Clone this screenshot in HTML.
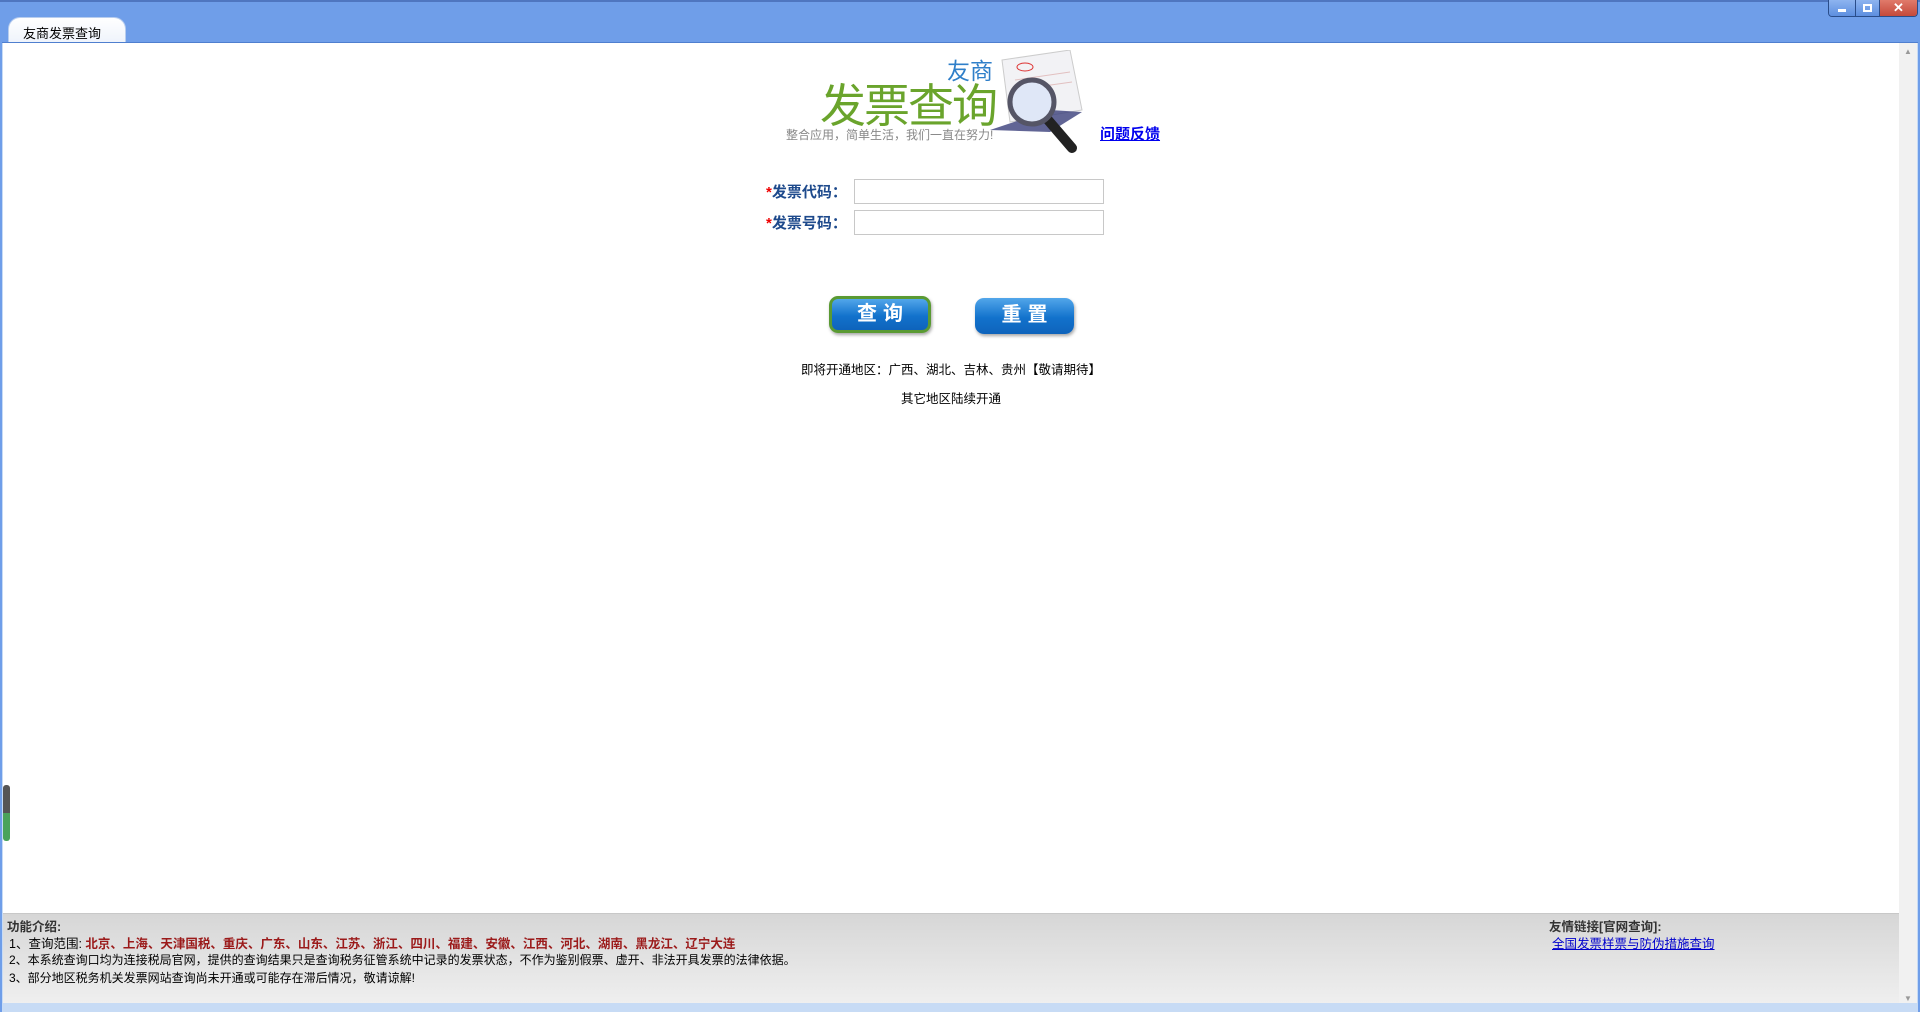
<!DOCTYPE html>
<html><head><meta charset="utf-8"><style>
*{margin:0;padding:0;box-sizing:border-box}
body{width:1920px;height:1012px;overflow:hidden;background:#6f9ee9;font-family:"Liberation Sans","Noto Sans CJK SC","WenQuanYi Zen Hei",sans-serif;position:relative}
.abs{position:absolute}
.tab{left:8px;top:17px;width:118px;height:26px;background:linear-gradient(#fff,#eef3fb);border-radius:12px 12px 0 0;font-size:13px;color:#000;padding:5px 0 0 14px;border:1px solid #b8cdee;border-bottom:0}
.frame{left:2px;top:42px;width:1916px;height:970px;background:#c7dbf5;border-top:1px solid #4f7fcf}
.content{left:3px;top:43px;width:1896px;height:870px;background:#fff}
.sb{left:1899px;top:43px;width:18px;height:960px;background:#f1f1f1}
.bottom{left:3px;top:913px;width:1896px;height:90px;background:linear-gradient(#d6d6d6,#efefef);border-top:1px solid #c8c8c8;font-size:12.5px;color:#000}
.lbl{font-size:15px;font-weight:bold;color:#1e4a8c}
.lbl b{color:#e00}
.inp{width:250px;height:25px;border:1px solid #c8c8c8;background:#fff}
.btn{width:102px;height:37px;border-radius:9px;background:linear-gradient(#52a6ea,#1272cc 55%,#0e63bb);color:#fff;font-size:20px;font-weight:bold;text-align:center;line-height:35px;letter-spacing:6px;text-indent:6px;box-shadow:1px 2px 3px rgba(0,0,0,.35)}
.t{font-size:12.5px;color:#000;text-align:center;width:400px;left:751px}
</style></head><body>
<div class="abs" style="left:0;top:0;width:1920px;height:2px;background:#4f76c0"></div>
<div class="abs tab">友商发票查询</div>
<div class="abs" style="left:1828px;top:0;width:90px;height:17px;border-radius:0 0 4px 4px;overflow:hidden;display:flex;border:1px solid #2a4d8a;border-top:0">
<div style="width:26px;background:linear-gradient(#8db4f0,#5d8fe0);position:relative"><div class="abs" style="left:9px;top:9px;width:8px;height:3px;background:#fff"></div></div>
<div style="width:24px;background:linear-gradient(#8db4f0,#5d8fe0);position:relative;border-left:1px solid #2a4d8a"><div class="abs" style="left:7px;top:4px;width:9px;height:8px;border:2px solid #fff"></div></div>
<div style="flex:1;background:linear-gradient(#e07a6a,#c5493a);color:#fff;font-weight:bold;font-size:13px;text-align:center;line-height:16px;border-left:1px solid #2a4d8a">✕</div>
</div>
<div class="abs frame"></div>
<div class="abs content"></div>
<div class="abs sb"><div style="color:#999;font-size:8px;text-align:center;margin-top:4px">▲</div><div style="color:#999;font-size:8px;text-align:center;margin-top:938px">▼</div></div>
<div class="abs" style="left:3px;top:785px;width:7px;height:56px;border-radius:3px;background:linear-gradient(#555 0,#555 50%,#4aa35a 50%,#4aa35a 100%)"></div>

<svg class="abs" style="left:990px;top:50px" width="100" height="105" viewBox="0 0 100 105">
<polygon points="12,10 80,0 92,60 20,72" fill="#f2f2f5" stroke="#ccc"/>
<ellipse cx="35" cy="17" rx="8" ry="4" fill="none" stroke="#d33"/>
<line x1="25" y1="30" x2="80" y2="22" stroke="#e2c0c0"/>
<line x1="25" y1="40" x2="82" y2="32" stroke="#e2c0c0"/>
<polygon points="0,80 60,60 92,62 60,82" fill="#3a3f7a" opacity=".8"/>
<line x1="58" y1="70" x2="82" y2="98" stroke="#222" stroke-width="10" stroke-linecap="round"/>
<circle cx="42" cy="52" r="22" fill="#dfe7f7" stroke="#556" stroke-width="5"/>
</svg>
<div class="abs" style="left:820px;top:70px;font-size:46px;color:#6aa42c;letter-spacing:-2px;text-shadow:0 0 3px #fff">发票查询</div>
<div class="abs" style="left:947px;top:52px;font-size:23px;color:#2f7fc9">友商</div>
<div class="abs" style="left:786px;top:126px;font-size:12px;color:#888">整合应用，简单生活，我们一直在努力!</div>
<div class="abs" style="left:1100px;top:123px;font-size:15px;font-weight:bold;color:#0000ee;text-decoration:underline">问题反馈</div>

<div class="abs lbl" style="left:766px;top:181px"><b>*</b>发票代码：</div>
<div class="abs inp" style="left:854px;top:179px"></div>
<div class="abs lbl" style="left:766px;top:212px"><b>*</b>发票号码：</div>
<div class="abs inp" style="left:854px;top:210px"></div>

<div class="abs btn" style="left:829px;top:296px;border:3px solid #5a9a33;line-height:31px">查询</div>
<div class="abs btn" style="left:975px;top:298px;width:99px;height:36px">重置</div>

<div class="abs t" style="top:359px">即将开通地区：广西、湖北、吉林、贵州【敬请期待】</div>
<div class="abs t" style="top:388px">其它地区陆续开通</div>

<div class="abs bottom">
<div class="abs" style="left:4px;top:2px;font-weight:bold;color:#333">功能介绍:</div>
<div class="abs" style="left:6px;top:19px">1、查询范围: <b style="color:#9b1a1a;font-size:12.5px">北京、上海、天津国税、重庆、广东、山东、江苏、浙江、四川、福建、安徽、江西、河北、湖南、黑龙江、辽宁大连</b></div>
<div class="abs" style="left:6px;top:37px;font-size:12px">2、本系统查询口均为连接税局官网，提供的查询结果只是查询税务征管系统中记录的发票状态，不作为鉴别假票、虚开、非法开具发票的法律依据。</div>
<div class="abs" style="left:6px;top:55px;font-size:12px">3、部分地区税务机关发票网站查询尚未开通或可能存在滞后情况，敬请谅解!</div>
<div class="abs" style="left:1546px;top:2px;font-weight:bold;color:#333">友情链接[官网查询]:</div>
<div class="abs" style="left:1549px;top:19px;color:#0000cc;text-decoration:underline;font-size:12.5px">全国发票样票与防伪措施查询</div>
</div>
</body></html>
